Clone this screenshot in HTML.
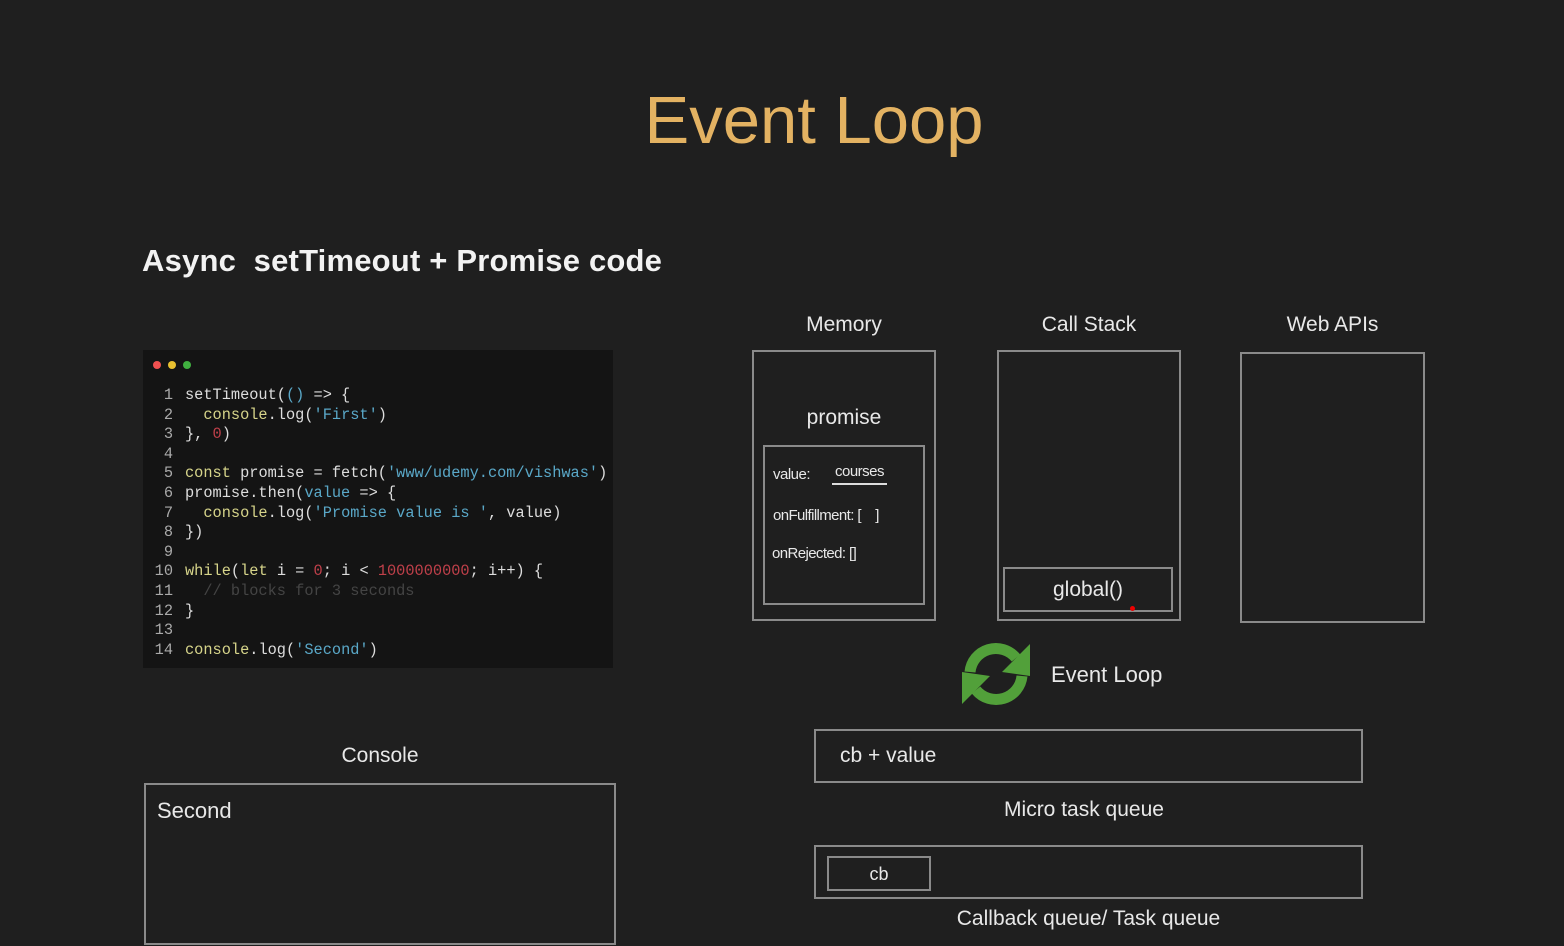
<!DOCTYPE html>
<html><head><style>
body{margin:0;width:1564px;height:946px;background:#1f1f1f;position:relative;overflow:hidden;font-family:"Liberation Sans",sans-serif;color:#e8e8e8}
.a{position:absolute}
.box{position:absolute;border:2px solid #8a8a8a;box-sizing:border-box}
.code{position:absolute;left:143px;top:350px;width:470px;height:318px;background:#141414;font-family:"Liberation Mono",monospace;font-size:15.3px}
.ln{position:absolute;left:0;width:30px;text-align:right;color:#aaa}
.cl{position:absolute;left:42px;color:#ddd;white-space:pre}
.y{color:#d6d48a}.b{color:#5aa8c8}.r{color:#c0404a}.c{color:#444}
</style></head><body>
<div class="a" style="left:0;width:1628px;top:82px;text-align:center;font-size:67px;color:#e3b262">Event Loop</div>
<div class="a" style="left:142px;top:243px;font-size:31px;font-weight:bold;color:#f2f2f2;letter-spacing:0.2px">Async&nbsp; setTimeout + Promise code</div>

<div class="code">
<div class="a" style="left:10px;top:11px;width:8px;height:8px;border-radius:50%;background:#f05050"></div>
<div class="a" style="left:25px;top:11px;width:8px;height:8px;border-radius:50%;background:#e8c030"></div>
<div class="a" style="left:40px;top:11px;width:8px;height:8px;border-radius:50%;background:#40b040"></div>
<div style="position:absolute;top:36px;left:0;width:100%;line-height:19.6px">
<div style="position:relative;height:274px">
<div class="ln" style="top:0">1</div><div class="cl" style="top:0">setTimeout(<span class="b">()</span> =&gt; {</div>
<div class="ln" style="top:19.6px">2</div><div class="cl" style="top:19.6px">  <span class="y">console</span>.log(<span class="b">'First'</span>)</div>
<div class="ln" style="top:39.2px">3</div><div class="cl" style="top:39.2px">}, <span class="r">0</span>)</div>
<div class="ln" style="top:58.8px">4</div>
<div class="ln" style="top:78.4px">5</div><div class="cl" style="top:78.4px"><span class="y">const</span> promise = fetch(<span class="b">'www/udemy.com/vishwas'</span>)</div>
<div class="ln" style="top:98px">6</div><div class="cl" style="top:98px">promise.then(<span class="b">value</span> =&gt; {</div>
<div class="ln" style="top:117.6px">7</div><div class="cl" style="top:117.6px">  <span class="y">console</span>.log(<span class="b">'Promise value is '</span>, value)</div>
<div class="ln" style="top:137.2px">8</div><div class="cl" style="top:137.2px">})</div>
<div class="ln" style="top:156.8px">9</div>
<div class="ln" style="top:176.4px">10</div><div class="cl" style="top:176.4px"><span class="y">while</span>(<span class="y">let</span> i = <span class="r">0</span>; i &lt; <span class="r">1000000000</span>; i++) {</div>
<div class="ln" style="top:196px">11</div><div class="cl c" style="top:196px">  // blocks for 3 seconds</div>
<div class="ln" style="top:215.6px">12</div><div class="cl" style="top:215.6px">}</div>
<div class="ln" style="top:235.2px">13</div>
<div class="ln" style="top:254.8px">14</div><div class="cl" style="top:254.8px"><span class="y">console</span>.log(<span class="b">'Second'</span>)</div>
</div></div></div>

<div class="a" style="left:145px;width:470px;top:744px;text-align:center;font-size:21px">Console</div>
<div class="box" style="left:144px;top:783px;width:472px;height:162px"></div>
<div class="a" style="left:157px;top:798px;font-size:22px">Second</div>

<div class="a" style="left:753px;width:182px;top:313px;text-align:center;font-size:21px">Memory</div>
<div class="a" style="left:998px;width:182px;top:313px;text-align:center;font-size:21px">Call Stack</div>
<div class="a" style="left:1241px;width:183px;top:313px;text-align:center;font-size:21px">Web APIs</div>
<div class="box" style="left:752px;top:350px;width:184px;height:271px"></div>
<div class="box" style="left:997px;top:350px;width:184px;height:271px"></div>
<div class="box" style="left:1240px;top:352px;width:185px;height:271px"></div>
<div class="a" style="left:753px;width:182px;top:406px;text-align:center;font-size:21px">promise</div>
<div class="box" style="left:763px;top:445px;width:162px;height:160px"></div>
<div class="a" style="left:773px;top:466px;font-size:15px;letter-spacing:-0.5px">value:</div>
<div class="a" style="left:832px;top:463px;font-size:15px;letter-spacing:-0.5px;border-bottom:2px solid #ddd;padding:0 3px 3px">courses</div>
<div class="a" style="left:773px;top:507px;font-size:15px;letter-spacing:-0.6px">onFulfillment: [&nbsp;&nbsp;&nbsp;&nbsp;]</div>
<div class="a" style="left:772px;top:545px;font-size:15px;letter-spacing:-0.6px">onRejected: []</div>
<div class="box" style="left:1003px;top:567px;width:170px;height:45px"></div>
<div class="a" style="left:1003px;width:170px;top:578px;text-align:center;font-size:21px">global()</div>
<div class="a" style="left:1130px;top:606px;width:5px;height:5px;border-radius:50%;background:#e00"></div>

<svg class="a" style="left:958px;top:638px" width="76" height="72" viewBox="0 0 76 72">
<g fill="none" stroke="#52a03a" stroke-width="11">
<path d="M12 34 A26 26 0 0 1 58 20"/>
<path d="M64 38 A26 26 0 0 1 18 52"/>
</g>
<polygon points="72,6 72,38 44,34" fill="#52a03a"/>
<polygon points="4,66 4,34 32,38" fill="#52a03a"/>
</svg>
<div class="a" style="left:1051px;top:662px;font-size:22px">Event Loop</div>

<div class="box" style="left:814px;top:729px;width:549px;height:54px"></div>
<div class="a" style="left:840px;top:744px;font-size:21px">cb + value</div>
<div class="a" style="left:814px;width:540px;top:798px;text-align:center;font-size:21px">Micro task queue</div>
<div class="box" style="left:814px;top:845px;width:549px;height:54px"></div>
<div class="box" style="left:827px;top:856px;width:104px;height:35px"></div>
<div class="a" style="left:827px;width:104px;top:864px;text-align:center;font-size:18px">cb</div>
<div class="a" style="left:814px;width:549px;top:907px;text-align:center;font-size:21px">Callback queue/ Task queue</div>
</body></html>
